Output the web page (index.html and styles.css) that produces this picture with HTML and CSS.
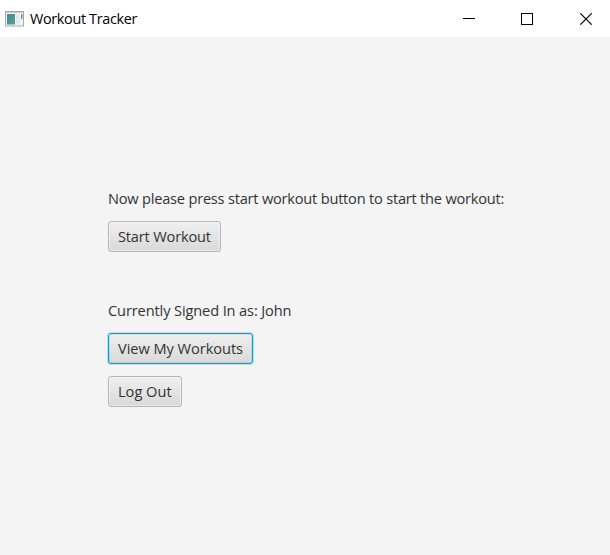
FILE: index.html
```html
<!DOCTYPE html>
<html lang="en">
<head>
<meta charset="utf-8">
<title>Workout Tracker</title>
<link rel="stylesheet" href="styles.css">
</head>
<body>
<header class="titlebar">
  <svg class="app-icon" width="20" height="16" viewBox="0 0 20 16">
    <defs><linearGradient id="pane" x1="0" y1="0" x2="1" y2="1"><stop offset="0" stop-color="#4b84a8"/><stop offset="1" stop-color="#4fa878"/></linearGradient></defs>
    <rect x=".5" y=".5" width="18" height="14.5" fill="#f4f5f6" stroke="#a6aaaf"/>
    <path d="M1 1.5h17" stroke="#c5c9ce"/>
    <rect x="2" y="3" width="8" height="10.5" fill="url(#pane)"/>
    <rect x="11" y="3" width="4" height="10.5" fill="#e7e9eb"/>
    <path d="M16 3h1.5v4l-1.5 2z" fill="#55a083"/>
  </svg>
  <h1 class="title"><span>Workout Tracker</span></h1>
  <svg class="controls" width="130" height="12" viewBox="0 0 130 12" fill="none" stroke="#000">
    <path d="M0 5.5h12"/>
    <rect x="58.5" y=".5" width="11" height="11"/>
    <path d="M117.3.3l11.4 11.4M128.7.3l-11.4 11.4" stroke-width="1.1"/>
  </svg>
</header>
<main class="content">
  <p class="label prompt"><span>Now please press start workout button to start the workout:</span></p>
  <button class="button start"><span>Start Workout</span></button>
  <p class="label user"><span>Currently Signed In as: John</span></p>
  <button class="button focused view"><span>View My Workouts</span></button>
  <button class="button logout"><span>Log Out</span></button>
</main>
</body>
</html>
```

FILE: styles.css
```css
* { box-sizing: border-box; }
body {
  margin: 0;
  height: 555px;
  background: #f4f4f4;
  font-family: "Open Sans", sans-serif;
  font-size: 14.6px;
  color: #333;
  overflow: hidden;
}
.titlebar {
  display: flex;
  align-items: center;
  height: 37px;
  padding-left: 5px;
  background: #fff;
}
.app-icon { flex: none; }
.title {
  margin: 0 0 0 5px;
  font-size: 14.4px;
  font-weight: 400;
  line-height: 20px;
  color: #000;
  letter-spacing: -0.33px;
  white-space: nowrap;
}
.controls { margin-left: auto; margin-right: 17px; flex: none; }
.content {
  display: flex;
  flex-direction: column;
  align-items: flex-start;
  padding: 152px 0 0 108px;
}
.label {
  margin: 0 0 14px;
  line-height: 18px;
  white-space: nowrap;
}
.prompt { letter-spacing: -0.21px; }
.user { margin-top: 49px; letter-spacing: -0.12px; }
.button {
  height: 31px;
  padding: 0 0 2px 9px;
  border: 1px solid #b5b5b5;
  border-radius: 3px;
  background: linear-gradient(#efefef, #d9d9d9);
  box-shadow: inset 0 0 0 1px rgba(255, 255, 255, .45);
  font: inherit;
  line-height: 20px;
  color: #333;
  text-align: left;
  white-space: nowrap;
}
.focused {
  border-color: #039ed3;
  box-shadow: 0 0 0 1px rgba(3, 158, 211, .25), inset 0 0 0 1px rgba(3, 158, 211, .15);
}
.start { width: 113px; letter-spacing: -0.17px; }
.view { width: 145px; margin-bottom: 12px; letter-spacing: -0.04px; }
.logout { width: 74px; }
```
